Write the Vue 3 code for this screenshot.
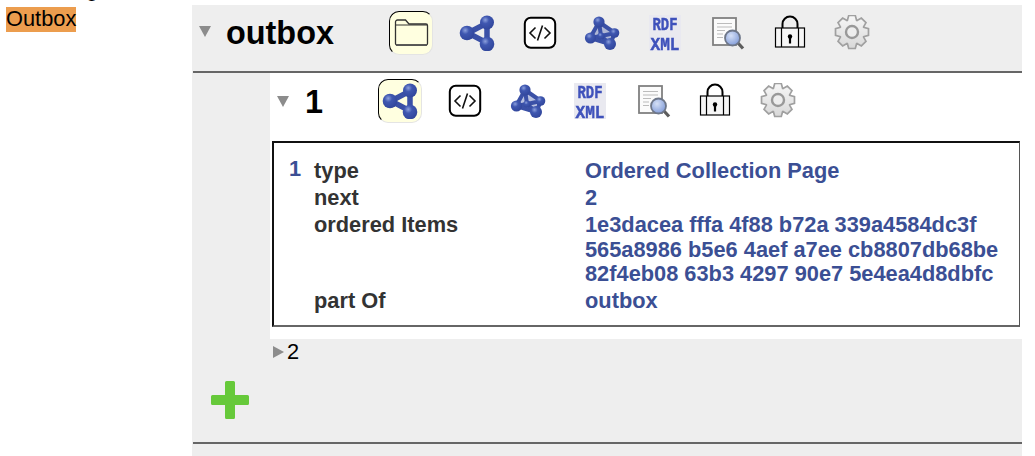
<script setup>
const gearPath = (() => {
  const pts = []
  const n = 8
  for (let i = 0; i < n; i++) {
    const a = (i / n) * Math.PI * 2 - Math.PI / 2
    const w = Math.PI / n
    const add = (ang, r) => pts.push(`${(18 + r * Math.cos(ang)).toFixed(2)} ${(17 + r * Math.sin(ang)).toFixed(2)}`)
    add(a - w * 0.95, 12.6)
    add(a - w * 0.5, 16.8)
    add(a + w * 0.5, 16.8)
    add(a + w * 0.95, 12.6)
  }
  return 'M' + pts.join('L') + 'Z'
})()

const outerTools = ['folder', 'network', 'code', 'tab', 'rdf', 'doc', 'lock', 'gear']
const innerTools = outerTools.slice(1)

const rows = [
  { label: 'type', values: ['Ordered Collection Page'] },
  { label: 'next', values: ['2'] },
  {
    label: 'ordered Items',
    values: [
      '1e3dacea fffa 4f88 b72a 339a4584dc3f',
      '565a8986 b5e6 4aef a7ee cb8807db68be',
      '82f4eb08 63b3 4297 90e7 5e4ea4d8dbfc'
    ]
  },
  { label: 'part Of', values: ['outbox'] }
]
</script>

<template>
  <div class="page">
    <svg class="sprite" aria-hidden="true">
      <defs>
        <radialGradient id="ball" cx="0.38" cy="0.32" r="0.75">
          <stop offset="0" stop-color="#8b9fdc" />
          <stop offset="0.35" stop-color="#3f57b0" />
          <stop offset="1" stop-color="#2f4499" />
        </radialGradient>
        <radialGradient id="lens" cx="0.4" cy="0.35" r="0.7">
          <stop offset="0" stop-color="#d5e0f6" />
          <stop offset="1" stop-color="#7f9ad8" />
        </radialGradient>
        <linearGradient id="gearFill" x1="0" y1="0" x2="0" y2="1">
          <stop offset="0" stop-color="#f7f7f7" />
          <stop offset="1" stop-color="#d8d8d8" />
        </linearGradient>
      </defs>
      <symbol id="i-folder" viewBox="0 0 36 36">
        <path d="M2.500 28.500V7a2 2 0 0 1 2-2h8l3.500 4h17a1.500 1.500 0 0 1 1.500 1.500V28.500a1.500 1.500 0 0 1-1.500 1.500H4a1.500 1.500 0 0 1-1.500-1.500Z" fill="#ffffe0" stroke="#333" stroke-width="1.300" />
        <path d="M2.500 10H34" fill="none" stroke="#333" stroke-width="1" />
        <path d="M3 30.200H34" stroke="#555" stroke-width="1.500" />
      </symbol>
      <symbol id="i-network" viewBox="0 0 36 36">
        <path d="M9 18 28 8V28Z" fill="none" stroke="#3a50a6" stroke-width="5.500" />
        <circle cx="8" cy="18" r="7.300" fill="url(#ball)" />
        <circle cx="28" cy="7.500" r="7" fill="url(#ball)" />
        <circle cx="28" cy="29" r="7.300" fill="url(#ball)" />
      </symbol>
      <symbol id="i-code" viewBox="0 0 36 36">
        <rect x="2.800" y="2.800" width="30.400" height="30" rx="6" fill="#fff" stroke="#000" stroke-width="2" />
        <path d="M13.500 12.500 8 18l5.500 5.500M22.500 12.500 28 18l-5.500 5.500M20.500 10.500 15.500 25.500" fill="none" stroke="#111" stroke-width="1.600" />
      </symbol>
      <symbol id="i-tab" viewBox="0 0 36 36">
        <path d="M15 7 6 23 26 29 31 18ZM15 7 17 21 26 29M6 23 17 21 31 18" fill="#3a50a6" fill-opacity="0.35" stroke="#3a50a6" stroke-width="4" />
        <circle cx="15" cy="7" r="5.600" fill="url(#ball)" />
        <circle cx="6.500" cy="23" r="5.600" fill="url(#ball)" />
        <circle cx="26" cy="29" r="6" fill="url(#ball)" />
        <circle cx="30.500" cy="18" r="4.800" fill="url(#ball)" />
        <circle cx="17" cy="21" r="3.600" fill="url(#ball)" />
      </symbol>
      <symbol id="i-rdf" viewBox="0 0 36 36">
        <rect x="2" y="-1" width="32" height="38" rx="2" fill="#e9e9f0" />
        <text x="18" y="14.500" text-anchor="middle" class="rdf-text" textLength="25" lengthAdjust="spacingAndGlyphs">RDF</text>
        <text x="18" y="35" text-anchor="middle" class="rdf-text" textLength="29" lengthAdjust="spacingAndGlyphs">XML</text>
      </symbol>
      <symbol id="i-doc" viewBox="0 0 36 36">
        <rect x="4" y="3" width="23" height="27" fill="#fbfbfb" stroke="#808080" stroke-width="1.800" />
        <path d="M8 8.500h15M8 12h15M8 15.500h8M8 19h6M8 22.500h6" stroke="#bcbcbc" stroke-width="1.100" />
        <path d="M29 28 34 33.500" stroke="#5d5d5d" stroke-width="3.200" />
        <circle cx="23.500" cy="23" r="7.500" fill="url(#lens)" stroke="#6d7688" stroke-width="1.800" />
      </symbol>
      <symbol id="i-lock" viewBox="0 0 36 36">
        <path d="M10.500 13.500V9a7.500 7.500 0 0 1 15 0V13.500" fill="none" stroke="#000" stroke-width="2" />
        <rect x="3.500" y="13" width="29" height="19" fill="#f6f6f6" stroke="#000" stroke-width="1.200" />
        <path d="M9.500 13V32M26.500 13V32" stroke="#000" stroke-width="1.200" />
        <circle cx="18" cy="21.500" r="2.200" fill="#000" />
        <path d="M18 21.500V28.500" stroke="#000" stroke-width="2.200" />
      </symbol>
      <symbol id="i-gear" viewBox="0 0 36 36">
        <path :d="gearPath" fill="url(#gearFill)" stroke="#a0a0a0" stroke-width="1.700" />
        <circle cx="18" cy="17" r="6" fill="#eee" stroke="#999" stroke-width="2.400" />
      </symbol>
    </svg>

    <aside class="side">
      <div class="side-line side-clip">Following</div>
      <div class="side-line"><span class="current">Outbox</span></div>
    </aside>

    <main class="panel">
      <header class="head">
        <span class="tri tri-down"></span>
        <h1 class="title title-outer">outbox</h1>
        <div class="tools">
          <span v-for="t in outerTools" :key="t" class="tool" :class="{ active: t === 'folder' }">
            <svg class="icon" :class="t === 'folder' || t === 'code' || t === 'lock' ? 'crisp' : 'soft'"><use :href="'#i-' + t" /></svg>
          </span>
        </div>
      </header>

      <div class="body">
        <div class="gutter">
          <svg class="plus" viewBox="0 0 38 38" aria-label="add">
            <path d="M14 1.500A1.500 1.500 0 0 1 15.500 0h7A1.500 1.500 0 0 1 24 1.500V14H36.500A1.500 1.500 0 0 1 38 15.500v7A1.500 1.500 0 0 1 36.500 24H24V36.500A1.500 1.500 0 0 1 22.500 38h-7A1.500 1.500 0 0 1 14 36.500V24H1.500A1.500 1.500 0 0 1 0 22.500v-7A1.500 1.500 0 0 1 1.500 14H14Z" fill="#66c93a" />
          </svg>
        </div>
        <div class="content">
          <section class="page-card">
            <div class="sub-head">
              <span class="tri tri-down"></span>
              <h2 class="title title-inner">1</h2>
              <div class="tools tools-inner">
                <span v-for="t in innerTools" :key="t" class="tool" :class="{ active: t === 'network' }">
                  <svg class="icon" :class="t === 'code' || t === 'lock' ? 'crisp' : 'soft'"><use :href="'#i-' + t" /></svg>
                </span>
              </div>
            </div>
            <div class="frame">
              <span class="index">1</span>
              <div class="grid">
                <template v-for="r in rows" :key="r.label">
                  <div class="label">{{ r.label }}</div>
                  <div class="value"><div v-for="v in r.values" :key="v">{{ v }}</div></div>
                </template>
              </div>
            </div>
          </section>
          <div class="collapsed">
            <span class="tri tri-right"></span>
            <span class="num">2</span>
          </div>
        </div>
      </div>
    </main>
  </div>
</template>

<style>
html, body { overflow: hidden; background: #fff; }
</style>

<style scoped>
.page {
  display: flex;
  align-items: flex-start;
  width: 1035px;
  height: 456px;
  overflow: hidden;
  font-family: "Liberation Sans", Arial, sans-serif;
  color: #000;
  background: #fff;
}
.sprite { position: absolute; width: 0; height: 0; overflow: hidden; }
.side {
  width: 192px;
  flex: none;
  margin-top: -24px;
  padding-left: 6px;
  box-sizing: border-box;
  font-size: 21.800px;
  line-height: 25px;
}
.side-clip { margin-bottom: 5px; }
.current { background: #ec9d4e; display: inline-block; height: 25px; line-height: 24px; }
.panel {
  width: 830px;
  height: 451px;
  margin-top: 5px;
  flex: none;
  background: #eee;
  display: flex;
  flex-direction: column;
}
.head {
  height: 68px;
  box-sizing: border-box;
  display: flex;
  align-items: center;
  border-bottom: 2px solid #666;
  padding-left: 6px;
  margin-left: 1px;
  flex: none;
}
.head .tri-down { margin-top: -13px; }
.tri { display: inline-block; flex: none; width: 0; height: 0; }
.tri-down {
  border-left: 6.500px solid transparent;
  border-right: 6.500px solid transparent;
  border-top: 11px solid #8c8c8c;
}
.tri-right {
  border-top: 6px solid transparent;
  border-bottom: 6px solid transparent;
  border-left: 11px solid #8c8c8c;
}
.title { margin: 0; font-weight: 700; }
.title-outer { font-size: 32.400px; width: 154px; margin-left: 15px; line-height: 40px; margin-top: -10px; }
.tools { display: flex; align-items: center; margin-top: -11px; margin-left: -1px; }
.tool {
  width: 62.500px;
  height: 40px;
  display: flex;
  align-items: center;
  justify-content: center;
  flex: none;
}
.tool.active {
  width: 44px;
  height: 44px;
  margin: -2px 13px -2px 10px;
  box-sizing: border-box;
  background: #ffffe0;
  border-radius: 10px;
  border: 1px solid;
  border-color: #000 #e4e4e4 #e4e4e4 #000;
}
.icon { width: 36px; height: 36px; display: block; overflow: visible; }
.soft { filter: blur(0.55px); }
.crisp { filter: blur(0.15px); }
.rdf-text {
  font-family: "Liberation Mono", monospace;
  font-weight: 700;
  font-size: 19px;
  fill: #3f52bb;
  stroke: #3f52bb;
  stroke-width: 0.500px;
}
.body { flex: 1; display: flex; min-height: 0; }
.gutter {
  width: 78px;
  flex: none;
  display: flex;
  align-items: flex-end;
  justify-content: flex-start;
  padding: 0 0 37px 19px;
  box-sizing: border-box;
}
.plus { width: 38px; height: 38px; display: block; flex: none; }
.content {
  flex: 1;
  min-width: 0;
  border-bottom: 2px solid #666;
  margin-bottom: 12px;
  margin-left: -77px;
  padding-left: 77px;
}
.page-card { background: #fff; height: 266px; box-sizing: border-box; padding: 0 2px; }
.sub-head {
  height: 69px;
  margin-bottom: -1px;
  display: flex;
  align-items: center;
  padding-left: 5px;
  box-sizing: border-box;
}
.title-inner { font-size: 32.400px; width: 70px; margin-left: 16px; line-height: 40px; margin-top: -12px; }
.sub-head .tri-down { margin-top: -12px; }
.sub-head .tools { margin-top: -14px; margin-left: -6px; }
.sub-head .tool.active { margin-left: 9px; margin-right: 12px; }
.frame {
  display: flex;
  height: 186px;
  box-sizing: border-box;
  border: 2px solid #111;
  border-right: 1px solid #555;
  border-bottom: 2px solid #666;
  padding: 15px 0 0 15px;
  font-size: 21.800px;
  font-weight: 700;
}
.index { width: 25px; flex: none; color: #3b4f94; line-height: 24px; margin-top: -1px; }
.grid {
  display: grid;
  grid-template-columns: 271px 1fr;
  align-content: start;
  line-height: 24.500px;
}
.label { color: #333; padding: 1.250px 0; }
.value { color: #3b4f94; padding: 1.250px 0; white-space: nowrap; }
.collapsed {
  display: flex;
  align-items: center;
  height: 24px;
  margin-top: 1px;
  padding-left: 3px;
  font-size: 21.800px;
}
.num { margin-left: 3px; }
</style>
